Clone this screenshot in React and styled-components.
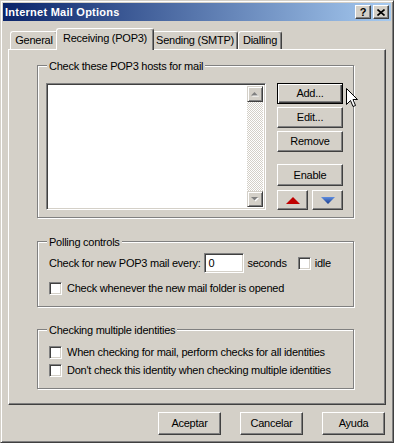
import React from 'react';
import styled, { createGlobalStyle } from 'styled-components';

const Global = createGlobalStyle`
  html, body { margin: 0; padding: 0; background: #d4d0c8; }
  body { font-family: "Liberation Sans", Arial, sans-serif; font-size: 11px; }
  * { box-sizing: border-box; }
`;

const Window = styled.div`
  position: relative;
  width: 394px;
  height: 443px;
  background: #d4d0c8;
  border: 1px solid;
  border-color: #d4d0c8 #404040 #404040 #d4d0c8;
  box-shadow: inset 1px 1px #fff, inset -1px -1px #808080;
  padding: 2px;
  display: flex;
  flex-direction: column;
  color: #000;
  font-family: "Liberation Sans", Arial, sans-serif;
  font-size: 11px;
  letter-spacing: -0.25px;
  overflow: hidden;
`;

const TitleBar = styled.div`
  height: 18px;
  flex: none;
  display: flex;
  align-items: center;
  padding: 0 2px 0 2px;
  background: linear-gradient(to right, #0a246a, #a6caf0);
`;

const TitleText = styled.div`
  flex: 1;
  color: #fff;
  font-weight: bold;
  font-size: 11px;
  letter-spacing: 0.25px;
  line-height: 13px;
`;

const TitleButton = styled.div`
  width: 16px;
  height: 14px;
  margin-left: ${p => p.$gap}px;
  background: #d4d0c8;
  border: 1px solid;
  border-color: #fff #404040 #404040 #fff;
  box-shadow: inset -1px -1px #808080;
  display: flex;
  align-items: center;
  justify-content: center;
  font-weight: bold;
  font-size: 11px;
  line-height: 11px;
  letter-spacing: 0;
`;

const Body = styled.div`
  display: flex;
  flex-direction: column;
  padding: 7px 5px 0 5px;
`;

const TabRow = styled.div`
  display: flex;
  align-items: flex-start;
  height: 21px;
  padding-left: 2px;
  position: relative;
  z-index: 1;
`;

const Tab = styled.div`
  width: ${p => p.$w + (p.$active ? 4 : 0)}px;
  height: ${p => (p.$active ? 22 : 18)}px;
  margin: ${p => (p.$active ? '0 -2px 0 -2px' : '3px 0 0 0')};
  background: #d4d0c8;
  border-top: 1px solid #fff;
  border-left: 1px solid #fff;
  border-right: 1px solid #404040;
  box-shadow: inset -1px 0 #808080;
  border-radius: 3px 3px 0 0;
  display: flex;
  justify-content: center;
  padding-top: ${p => (p.$active ? 3 : 2)}px;
  line-height: 13px;
  white-space: nowrap;
  position: relative;
  z-index: ${p => (p.$active ? 2 : 1)};
`;

const Panel = styled.div`
  height: 356px;
  border: 1px solid;
  border-color: #fff #404040 #404040 #fff;
  box-shadow: inset -1px -1px #808080;
  padding: 15px 0 0 28px;
  display: flex;
  flex-direction: column;
`;

const GroupBox = styled.div`
  position: relative;
  width: 317px;
  margin-top: ${p => p.$mt || 0}px;
  padding: ${p => p.$pad};
  border: 1px solid #808080;
  box-shadow: inset 1px 1px #fff, 1px 1px #fff;
  display: flex;
  flex-direction: ${p => p.$dir || 'column'};
`;

const GroupLabel = styled.div`
  position: absolute;
  top: -6px;
  left: 9px;
  padding: 0 2px;
  background: #d4d0c8;
  line-height: 13px;
  white-space: nowrap;
`;

const ListBox = styled.div`
  width: 220px;
  height: 127px;
  background: #fff;
  border: 1px solid;
  border-color: #808080 #fff #fff #808080;
  box-shadow: inset 1px 1px #404040, inset -1px -1px #d4d0c8;
  padding: 2px;
  display: flex;
  justify-content: flex-end;
`;

const ScrollBar = styled.div`
  width: 16px;
  height: 100%;
  display: flex;
  flex-direction: column;
  justify-content: space-between;
  background-color: #fff;
  background-image: repeating-conic-gradient(#d4d0c8 0 25%, #fff 0 50%);
  background-size: 2px 2px;
`;

const ScrollButton = styled.div`
  width: 16px;
  height: 16px;
  background: #d4d0c8;
  border: 1px solid;
  border-color: #d4d0c8 #404040 #404040 #d4d0c8;
  box-shadow: inset 1px 1px #fff, inset -1px -1px #808080;
  display: flex;
  align-items: center;
  justify-content: center;
`;

const ButtonColumn = styled.div`
  width: 66px;
  margin-left: 11px;
  display: flex;
  flex-direction: column;
`;

const PushButton = styled.div`
  width: ${p => p.$w ? `${p.$w}px` : '100%'};
  height: ${p => p.$h}px;
  margin-top: ${p => p.$mt || 0}px;
  background: #d4d0c8;
  border: 1px solid;
  border-color: ${p => (p.$default ? '#000' : '#fff #404040 #404040 #fff')};
  box-shadow: ${p =>
    p.$default
      ? 'inset 1px 1px #fff, inset -1px -1px #404040, inset -2px -2px #808080'
      : 'inset -1px -1px #808080'};
  display: flex;
  align-items: center;
  justify-content: center;
  line-height: 13px;
  white-space: nowrap;
`;

const ArrowRow = styled.div`
  display: flex;
  justify-content: space-between;
  margin-top: 4px;
`;

const Row = styled.div`
  display: flex;
  align-items: center;
  height: ${p => p.$h}px;
  margin-top: ${p => p.$mt || 0}px;
  line-height: 13px;
  white-space: nowrap;
`;

const Text = styled.span`
  margin-left: ${p => p.$ml || 0}px;
`;

const TextInput = styled.input`
  width: 40px;
  height: 20px;
  margin: 0 0 0 4px;
  padding: 0 0 0 3px;
  background: #fff;
  border: 1px solid;
  border-color: #808080 #fff #fff #808080;
  box-shadow: inset 1px 1px #404040, inset -1px -1px #d4d0c8;
  font: inherit;
  letter-spacing: inherit;
  color: #000;
  outline: none;
`;

const CheckBox = styled.span`
  flex: none;
  width: 13px;
  height: 13px;
  margin-left: ${p => p.$ml || 0}px;
  background: #fff;
  border: 1px solid;
  border-color: #808080 #fff #fff #808080;
  box-shadow: inset 1px 1px #404040, inset -1px -1px #d4d0c8;
`;

const Footer = styled.div`
  display: flex;
  justify-content: flex-end;
  gap: 19px;
  margin-top: 7px;
  padding-right: 1px;
`;

const Cursor = styled.svg`
  position: absolute;
  left: 345px;
  top: 87px;
`;

const tabs = [
  { label: 'General', w: 48 },
  { label: 'Receiving (POP3)', w: 94, active: true },
  { label: 'Sending (SMTP)', w: 86 },
  { label: 'Dialling', w: 44 },
];

const ScrollArrow = ({ down }) => (
  <svg width="8" height="5" viewBox="0 0 8 5">
    {down ? (
      <>
        <polygon points="1,1 8,1 4.5,4.5" fill="#fff" />
        <polygon points="0,0 7,0 3.5,3.5" fill="#808080" />
      </>
    ) : (
      <>
        <polygon points="1,4.5 8,4.5 4.5,1" fill="#fff" />
        <polygon points="0,3.5 7,3.5 3.5,0" fill="#808080" />
      </>
    )}
  </svg>
);

export default function App() {
  return (
    <>
      <Global />
      <Window>
        <TitleBar>
          <TitleText>Internet Mail Options</TitleText>
          <TitleButton $gap={0}>?</TitleButton>
          <TitleButton $gap={2}>
            <svg width="8" height="7" viewBox="0 0 8 7">
              <path d="M0.5 0.5 L7.5 6.5 M7.5 0.5 L0.5 6.5" stroke="#000" strokeWidth="1.6" />
            </svg>
          </TitleButton>
        </TitleBar>
        <Body>
          <TabRow>
            {tabs.map(t => (
              <Tab key={t.label} $w={t.w} $active={t.active}>
                {t.label}
              </Tab>
            ))}
          </TabRow>
          <Panel>
            <GroupBox $pad="17px 10px 7px 8px" $dir="row">
              <GroupLabel>Check these POP3 hosts for mail</GroupLabel>
              <ListBox>
                <ScrollBar>
                  <ScrollButton><ScrollArrow /></ScrollButton>
                  <ScrollButton><ScrollArrow down /></ScrollButton>
                </ScrollBar>
              </ListBox>
              <ButtonColumn>
                <PushButton $h={21} $default>Add...</PushButton>
                <PushButton $h={21} $mt={3}>Edit...</PushButton>
                <PushButton $h={21} $mt={3}>Remove</PushButton>
                <PushButton $h={22} $mt={12}>Enable</PushButton>
                <ArrowRow>
                  <PushButton $h={20} $w={31}>
                    <svg width="14" height="7" viewBox="0 0 14 7">
                      <polygon points="0,7 7,0 14,7" fill="#c00000" />
                    </svg>
                  </PushButton>
                  <PushButton $h={20} $w={31}>
                    <svg width="14" height="7" viewBox="0 0 14 7">
                      <defs>
                        <linearGradient id="bl" x1="0" y1="0" x2="0" y2="1">
                          <stop offset="0" stopColor="#5f8ee0" />
                          <stop offset="1" stopColor="#1a3c8c" />
                        </linearGradient>
                      </defs>
                      <polygon points="0,0 14,0 7,7" fill="url(#bl)" />
                    </svg>
                  </PushButton>
                </ArrowRow>
              </ButtonColumn>
            </GroupBox>

            <GroupBox $mt={23} $pad="11px 10px 11px 11px">
              <GroupLabel>Polling controls</GroupLabel>
              <Row $h={20}>
                <Text>Check for new POP3 mail every:</Text>
                <TextInput readOnly value="0" />
                <Text $ml={3}>seconds</Text>
                <CheckBox $ml={11} />
                <Text $ml={4}>idle</Text>
              </Row>
              <Row $h={13} $mt={9}>
                <CheckBox />
                <Text $ml={5}>Check whenever the new mail folder is opened</Text>
              </Row>
            </GroupBox>

            <GroupBox $mt={22} $pad="16px 10px 11px 11px">
              <GroupLabel>Checking multiple identities</GroupLabel>
              <Row $h={13}>
                <CheckBox />
                <Text $ml={5}>When checking for mail, perform checks for all identities</Text>
              </Row>
              <Row $h={13} $mt={5}>
                <CheckBox />
                <Text $ml={5}>Don't check this identity when checking multiple identities</Text>
              </Row>
            </GroupBox>
          </Panel>
          <Footer>
            <PushButton $w={63} $h={23}>Aceptar</PushButton>
            <PushButton $w={63} $h={23}>Cancelar</PushButton>
            <PushButton $w={63} $h={23}>Ayuda</PushButton>
          </Footer>
        </Body>
        <Cursor width="12" height="19" viewBox="0 0 12 19">
          <path d="M0.5 0.5 L0.5 16.5 L4.5 12.5 L7 18.5 L9.5 17.5 L7 11.5 L11.5 11.5 Z" fill="#fff" stroke="#000" strokeWidth="1" strokeLinejoin="miter" />
        </Cursor>
      </Window>
    </>
  );
}
